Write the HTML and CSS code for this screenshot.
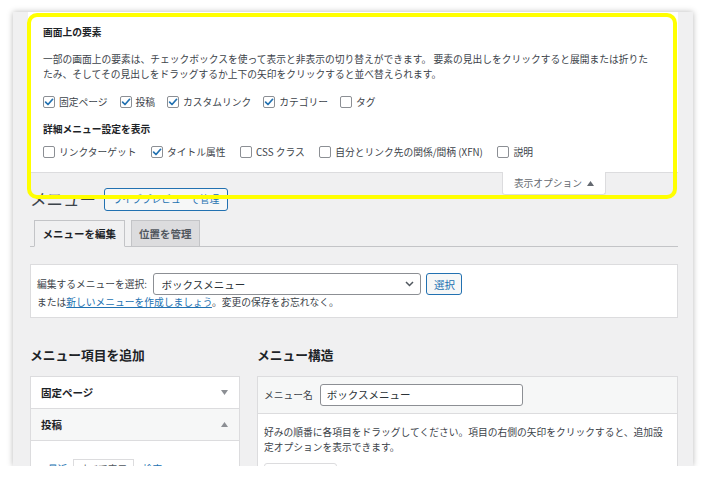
FILE: index.html
```html
<!DOCTYPE html>
<html lang="ja">
<head>
<meta charset="utf-8">
<title>メニュー</title>
<link rel="stylesheet" href="styles.css">
</head>
<body>
<div class="frame">
  <div class="screen-meta">
    <h5 class="meta-title">画面上の要素</h5>
    <p class="meta-desc">一部の画面上の要素は、チェックボックスを使って表示と非表示の切り替えができます。 要素の見出しをクリックすると展開または折りたたみ、そしてその見出しをドラッグするか上下の矢印をクリックすると並べ替えられます。</p>
    <div class="prefs prefs-1">
      <label class="pref"><span class="cb on"><svg viewBox="0 0 10 10" width="10" height="10"><path d="M1.6 5.1 L4 7.5 L8.6 2.3"/></svg></span>固定ページ</label>
      <label class="pref"><span class="cb on"><svg viewBox="0 0 10 10" width="10" height="10"><path d="M1.6 5.1 L4 7.5 L8.6 2.3"/></svg></span>投稿</label>
      <label class="pref"><span class="cb on"><svg viewBox="0 0 10 10" width="10" height="10"><path d="M1.6 5.1 L4 7.5 L8.6 2.3"/></svg></span>カスタムリンク</label>
      <label class="pref"><span class="cb on"><svg viewBox="0 0 10 10" width="10" height="10"><path d="M1.6 5.1 L4 7.5 L8.6 2.3"/></svg></span>カテゴリー</label>
      <label class="pref"><span class="cb"></span>タグ</label>
    </div>
    <h5 class="meta-title meta-title-2">詳細メニュー設定を表示</h5>
    <div class="prefs prefs-2">
      <label class="pref"><span class="cb"></span>リンクターゲット</label>
      <label class="pref"><span class="cb on"><svg viewBox="0 0 10 10" width="10" height="10"><path d="M1.6 5.1 L4 7.5 L8.6 2.3"/></svg></span>タイトル属性</label>
      <label class="pref"><span class="cb"></span>CSS クラス</label>
      <label class="pref"><span class="cb"></span>自分とリンク先の関係/間柄 (XFN)</label>
      <label class="pref"><span class="cb"></span>説明</label>
    </div>
  </div>

  <div class="head-row">
    <div class="title-group">
      <h1 class="page-title">メニュー</h1>
      <a class="btn-outline">ライブプレビューで管理</a>
    </div>
    <div class="meta-tab">表示オプション <svg class="tri" viewBox="0 0 7 5" width="7" height="5"><polygon points="0,5 3.5,0 7,5"/></svg></div>
  </div>

  <nav class="nav-tabs">
    <a class="nav-tab active">メニューを編集</a>
    <a class="nav-tab">位置を管理</a>
  </nav>

  <div class="manage-box">
    <div class="manage-row">
      <span class="manage-label">編集するメニューを選択:</span>
      <div class="select">
        <span>ボックスメニュー</span>
        <svg viewBox="0 0 9 6" width="9" height="6"><polyline points="1,1 4.5,4.5 8,1"/></svg>
      </div>
      <a class="btn-select">選択</a>
    </div>
    <p class="manage-note">または<a class="link">新しいメニューを作成しましょう</a>。変更の保存をお忘れなく。</p>
  </div>

  <div class="columns">
    <div class="col-left">
      <h2 class="col-title">メニュー項目を追加</h2>
      <div class="accordion">
        <div class="acc-row"><span>固定ページ</span><svg class="tri" viewBox="0 0 7 5" width="7" height="5"><polygon points="0,0 7,0 3.5,5"/></svg></div>
        <div class="acc-row open"><span>投稿</span><svg class="tri" viewBox="0 0 7 5" width="7" height="5"><polygon points="0,5 3.5,0 7,5"/></svg></div>
        <div class="acc-body">
          <a class="post-link">最近</a>
          <span class="post-tab">すべて表示</span>
          <a class="post-link">検索</a>
        </div>
      </div>
    </div>
    <div class="col-right">
      <h2 class="col-title">メニュー構造</h2>
      <div class="menu-box">
        <div class="menu-head">
          <span class="menu-label">メニュー名</span>
          <div class="menu-input">ボックスメニュー</div>
        </div>
        <div class="menu-body">
          <p class="menu-desc">好みの順番に各項目をドラッグしてください。項目の右側の矢印をクリックすると、追加設定オプションを表示できます。</p>
          <div class="cut-box"></div>
        </div>
      </div>
    </div>
  </div>

  <div class="highlight"></div>
</div>
</body>
</html>
```

FILE: styles.css
```css
* { box-sizing: border-box; }

html, body {
  margin: 0;
  padding: 0;
  background: #ffffff;
}

body {
  font-family: "Noto Sans CJK JP", "Noto Sans", sans-serif;
  color: #3c434a;
  font-size: 9.75px;
}

h1, h2, h5, p { margin: 0; }

.frame {
  position: relative;
  margin: 12px 0 0 13px;
  width: 680px;
  height: 454px;
  overflow: hidden;
  background: #f0f0f1;
  box-shadow: 0 0 6px rgba(0, 0, 0, 0.28);
}

/* Screen options panel */
.screen-meta {
  margin: 0 15px 0 15px;
  background: #ffffff;
  border-bottom: 1px solid #dcdcde;
  padding: 13px 20px 13px 15px;
}

.meta-title {
  font-size: 9.75px;
  font-weight: 700;
  line-height: 14px;
  color: #1d2327;
}

.meta-title-2 { margin-top: 13px; }

.meta-desc {
  margin-top: 13px;
  margin-right: 6px;
  line-height: 15px;
  font-size: 9.75px;
  color: #3c434a;
}

.prefs {
  display: flex;
  align-items: center;
  height: 14px;
}

.prefs-1 { margin-top: 13px; }
.prefs-2 { margin-top: 9px; }

.pref {
  display: flex;
  align-items: center;
  line-height: 14px;
  white-space: nowrap;
}

.prefs-1 .pref { margin-right: 12px; }
.prefs-2 .pref { margin-right: 14.5px; }

.cb {
  display: flex;
  align-items: center;
  justify-content: center;
  width: 12px;
  height: 12px;
  border: 1px solid #8c8f94;
  border-radius: 2px;
  background: #ffffff;
  margin-right: 4px;
  flex: none;
}

.cb svg path {
  fill: none;
  stroke: #2271b1;
  stroke-width: 1.7;
  stroke-linecap: round;
  stroke-linejoin: round;
}

/* Title row */
.head-row {
  display: flex;
  justify-content: space-between;
  align-items: flex-start;
  margin: 0 15px 0 17px;
}

.title-group {
  display: flex;
  align-items: center;
  margin-top: 15px;
  height: 23px;
}

.page-title {
  font-size: 16.5px;
  font-weight: 400;
  line-height: 23px;
  color: #3c434a;
  margin-right: 8px;
}

.btn-outline {
  display: block;
  height: 23px;
  border: 1px solid #2271b1;
  border-radius: 3px;
  background: #f6f7f7;
  color: #2271b1;
  padding: 0 7.5px;
  line-height: 21px;
  font-size: 9.75px;
}

.meta-tab {
  display: flex;
  align-items: center;
  justify-content: center;
  gap: 5px;
  width: 104px;
  height: 23px;
  margin-top: -1px;
  margin-right: 72px;
  background: #ffffff;
  border: 1px solid #dcdcde;
  border-top: none;
  border-radius: 0 0 3px 3px;
  color: #646970;
  font-size: 9.75px;
}

.meta-tab .tri { fill: #646970; }

/* Nav tabs */
.nav-tabs {
  display: flex;
  align-items: flex-end;
  gap: 6px;
  margin: 9px 15px 0 17px;
  padding-left: 4px;
  border-bottom: 1px solid #c3c4c7;
}

.nav-tab {
  display: block;
  height: 27px;
  margin-bottom: -1px;
  padding: 0 7.5px;
  border: 1px solid #c3c4c7;
  background: #dcdcde;
  color: #50575e;
  font-size: 10.5px;
  font-weight: 700;
  line-height: 25px;
}

.nav-tab.active {
  background: #f0f0f1;
  border-bottom-color: #f0f0f1;
  color: #1d2327;
}

/* Manage menus box */
.manage-box {
  margin: 17px 15px 0 17px;
  background: #ffffff;
  border: 1px solid #dcdcde;
  padding: 8px 7px 8px 6px;
}

.manage-row {
  display: flex;
  align-items: center;
  height: 22px;
}

.manage-label {
  margin-right: 6.5px;
  white-space: nowrap;
}

.select {
  display: flex;
  align-items: center;
  justify-content: space-between;
  width: 268px;
  height: 22px;
  border: 1px solid #8c8f94;
  border-radius: 3px;
  background: #ffffff;
  padding: 0 6px 0 7px;
  font-size: 10.5px;
  color: #2c3338;
}

.select svg polyline {
  fill: none;
  stroke: #50575e;
  stroke-width: 1.5;
}

.btn-select {
  display: flex;
  align-items: center;
  justify-content: center;
  width: 36px;
  height: 22px;
  margin-left: 5px;
  border: 1px solid #2271b1;
  border-radius: 3px;
  background: #f6f7f7;
  color: #2271b1;
  font-size: 10.5px;
}

.manage-note {
  margin-top: 1px;
  line-height: 13px;
  font-size: 9.75px;
}

.link {
  color: #2271b1;
  text-decoration: underline;
}

/* Columns */
.columns {
  display: flex;
  gap: 17px;
  margin: 29px 15px 0 17px;
}

.col-left { width: 210px; flex: none; }
.col-right { flex: 1; }

.col-title {
  font-size: 12.75px;
  font-weight: 700;
  line-height: 16px;
  color: #1d2327;
  margin-bottom: 13px;
}

.accordion {
  background: #ffffff;
  border: 1px solid #dcdcde;
}

.acc-row {
  display: flex;
  align-items: center;
  justify-content: space-between;
  height: 32px;
  padding: 0 11px 0 10px;
  border-bottom: 1px solid #dcdcde;
  font-size: 10.5px;
  font-weight: 700;
  color: #1d2327;
}

.acc-row.open { background: #f6f7f7; }

.acc-row .tri { fill: #8c8f94; }

.acc-body {
  display: flex;
  align-items: flex-start;
  padding: 18px 0 0 17px;
  height: 60px;
}

.post-link {
  color: #2271b1;
  font-size: 9.75px;
  line-height: 13px;
  margin-top: 4px;
}

.post-tab {
  margin: 0 9px 0 5.5px;
  padding: 3px 5.5px;
  border: 1px solid #dcdcde;
  border-bottom: none;
  font-size: 9.75px;
  line-height: 13px;
  color: #50575e;
}

.menu-box {
  background: #ffffff;
  border: 1px solid #dcdcde;
}

.menu-head {
  display: flex;
  align-items: center;
  background: #f6f7f7;
  border-bottom: 1px solid #dcdcde;
  padding: 7px 6px;
}

.menu-label {
  margin-right: 7px;
  white-space: nowrap;
}

.menu-input {
  width: 203px;
  height: 22px;
  border: 1px solid #8c8f94;
  border-radius: 3px;
  background: #ffffff;
  padding-left: 6px;
  font-size: 10.5px;
  line-height: 20px;
  color: #2c3338;
}

.menu-body {
  padding: 11px 6px 10px;
}

.menu-desc {
  line-height: 15px;
  font-size: 9.75px;
}

.cut-box {
  width: 73px;
  height: 20px;
  margin-top: 8px;
  border: 1px solid #dcdcde;
  border-radius: 3px;
}

/* Annotation highlight */
.highlight {
  position: absolute;
  left: 14px;
  top: 1px;
  width: 650px;
  height: 186px;
  border: 4px solid #ffff00;
  border-radius: 10px;
  pointer-events: none;
}
```
